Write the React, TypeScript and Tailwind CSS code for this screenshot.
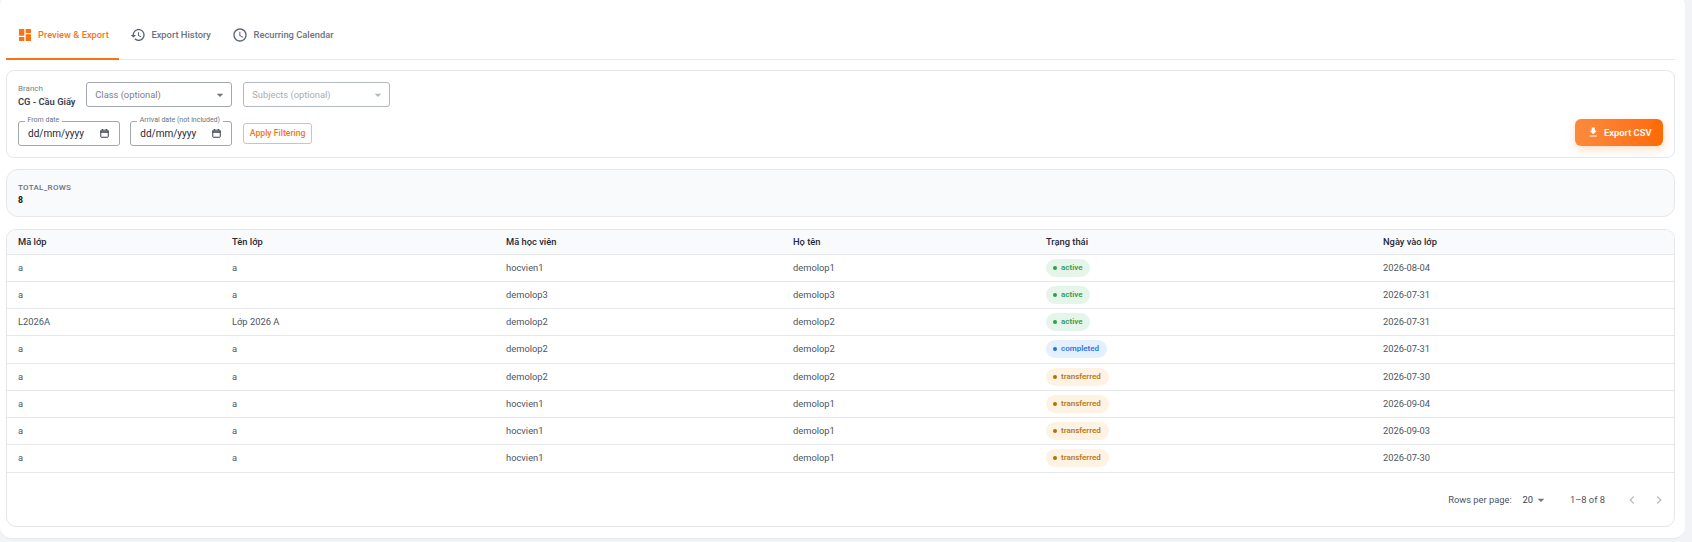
import type { ReactNode } from "react";

const rows = [
    ["a", "a", "hocvien1", "demolop1", "active", "2026-08-04"],
    ["a", "a", "demolop3", "demolop3", "active", "2026-07-31"],
    ["L2026A", "Lớp 2026 A", "demolop2", "demolop2", "active", "2026-07-31"],
    ["a", "a", "demolop2", "demolop2", "completed", "2026-07-31"],
    ["a", "a", "demolop2", "demolop2", "transferred", "2026-07-30"],
    ["a", "a", "hocvien1", "demolop1", "transferred", "2026-09-04"],
    ["a", "a", "hocvien1", "demolop1", "transferred", "2026-09-03"],
    ["a", "a", "hocvien1", "demolop1", "transferred", "2026-07-30"],
];

const headers = ["Mã lớp", "Tên lớp", "Mã học viên", "Họ tên", "Trạng thái", "Ngày vào lớp"];

// one row of the table, same grid for header and body
const gridCols = "grid grid-cols-[214px_274px_287px_253px_337px_1fr] items-center";

const Icon = ({ d, className }: { d: string; className: string }) => (
    <svg viewBox="0 0 24 24" fill="currentColor" className={className}>
        <path d={d} />
    </svg>
);

const ICONS = {
    dashboard: "M3 13h8V3H3zm0 8h8v-6H3zm10 0h8V11h-8zm0-18v6h8V3z",
    history:
        "M13 3c-4.97 0-9 4.03-9 9H1l3.89 3.89.07.14L9 12H6c0-3.87 3.13-7 7-7s7 3.13 7 7-3.13 7-7 7c-1.93 0-3.68-.79-4.94-2.06l-1.42 1.42C8.27 19.99 10.51 21 13 21c4.97 0 9-4.03 9-9s-4.03-9-9-9zm-1 5v5l4.28 2.54.72-1.21-3.5-2.08V8H12z",
    schedule:
        "M11.99 2C6.47 2 2 6.48 2 12s4.47 10 9.99 10C17.52 22 22 17.52 22 12S17.52 2 11.99 2zM12 20c-4.42 0-8-3.58-8-8s3.58-8 8-8 8 3.58 8 8-3.58 8-8 8zm.5-13H11v6l5.25 3.15.75-1.23-4.5-2.67z",
    download: "M19 9h-4V3H9v6H5l7 7 7-7zM5 18v2h14v-2H5z",
    caret: "M7 10l5 5 5-5z",
    left: "M15.41 7.41 14 6l-6 6 6 6 1.41-1.41L10.83 12z",
    right: "M10 6 8.59 7.41 13.17 12l-4.58 4.59L10 18l6-6z",
};

const Tab = ({ icon, label, active }: { icon: string; label: string; active?: boolean }) => (
    <div
        className={`-mb-px flex h-[60px] items-center gap-[5.33px] border-b-2 px-[10.67px] pt-[11px] text-[9.33px] font-medium ${
            active ? "border-[#f97316] text-[#f97316]" : "border-transparent text-[#6b7280]"
        }`}
    >
        <Icon d={icon} className={`size-[16px] ${active ? "text-[#f97316]" : "text-[#5b6472]"}`} />
        {label}
    </div>
);

const Select = ({ label, disabled, className }: { label: string; disabled?: boolean; className: string }) => (
    <div
        className={`flex h-[25px] items-center justify-between rounded-[3px] border pl-[8px] pr-[3px] text-[9.33px] ${className} ${
            disabled ? "border-[#b4b8bf] text-[#a8adb5]" : "border-[#a3a8b0] text-[#7a808a]"
        }`}
    >
        {label}
        <Icon d={ICONS.caret} className={`size-[16px] ${disabled ? "text-[#b5b9bf]" : "text-[#757575]"}`} />
    </div>
);

const DateField = ({ label }: { label: string }) => (
    <div className="relative flex h-[25px] w-[101.5px] items-center justify-between rounded-[3px] border border-[#a3a8b0] pl-[9px] pr-[10px] text-[10px] text-[#1f2937]">
        <span className="absolute left-[5.5px] top-[-6px] whitespace-nowrap bg-white px-[3px] text-[7px] leading-[9px] text-[#6b7280]">{label}</span>
        dd/mm/yyyy
        <svg viewBox="0 0 12 12" fill="none" stroke="#1f2937" className="size-[9px]">
            <rect x="1" y="1.5" width="10" height="9.5" rx="1" strokeWidth="1.2" />
            <path d="M1 4h10" strokeWidth="1.8" />
            <path d="M3.5 0v2M8.5 0v2" strokeWidth="1.2" />
        </svg>
    </div>
);

const statusStyles: Record<string, { pill: string; dot: string }> = {
    active: { pill: "w-[44px] bg-[#e6f5ea] text-[#2e9e5b]", dot: "bg-[#2e9e4f]" },
    completed: { pill: "w-[61px] bg-[#e5f0ff] text-[#2f74e8]", dot: "bg-[#1f6fe5]" },
    transferred: { pill: "w-[63px] bg-[#fef3e2] text-[#b7791f]", dot: "bg-[#b86e00]" },
};

const Status = ({ value }: { value: string }) => {
    const s = statusStyles[value];
    return (
        <span className={`flex h-[18px] items-center gap-[4px] rounded-full pl-[7px] text-[8px] font-semibold ${s.pill}`}>
            <span className={`size-[4px] rounded-full ${s.dot}`} />
            {value}
        </span>
    );
};

const Card = ({ className, children }: { className: string; children: ReactNode }) => (
    <div className={`border border-[#e5e7eb] ${className}`}>{children}</div>
);

export default function App() {
    return (
        <div className="h-[542px] w-full overflow-hidden bg-[#f2f3f6] pr-[7px] font-['Roboto',sans-serif]">
            <div className="-mt-[6px] h-[545px] rounded-[12px] border-b border-[#e5e7eb] bg-white pl-[6px] pr-[10px] pt-[6px]">
                <div className="flex h-[60px] border-b border-[#e5e7eb]">
                    <Tab icon={ICONS.dashboard} label="Preview & Export" active />
                    <Tab icon={ICONS.history} label="Export History" />
                    <Tab icon={ICONS.schedule} label="Recurring Calendar" />
                </div>

                <Card className="mt-[10px] flex h-[87.5px] items-end justify-between rounded-[8px] px-[11px] pb-[10.5px]">
                    <div className="flex flex-col gap-[14px]">
                        <div className="flex items-center">
                            <div className="h-[25px] w-[68.3px] whitespace-nowrap">
                                <div className="text-[8px] leading-[13px] text-[#7a808a]">Branch</div>
                                <div className="text-[9.33px] font-semibold leading-[13px] text-[#374151]">CG - Cầu Giấy</div>
                            </div>
                            <Select label="Class (optional)" className="w-[145.4px]" />
                            <Select label="Subjects (optional)" disabled className="ml-[11.6px] w-[146.4px]" />
                        </div>
                        <div className="flex items-center">
                            <DateField label="From date" />
                            <div className="ml-[10.8px]">
                                <DateField label="Arrival date (not included)" />
                            </div>
                            <button className="ml-[11.6px] flex h-[20.5px] w-[68.4px] items-center justify-center rounded-[3px] border border-[#f7b595] text-[8.67px] font-medium text-[#f97316]">
                                Apply Filtering
                            </button>
                        </div>
                    </div>
                    <button className="flex h-[26.7px] w-[88px] items-center justify-center gap-[5px] rounded-[6px] bg-gradient-to-r from-[#fb8a3c] to-[#ff6a00] text-[9.33px] font-semibold text-white shadow-[0_3px_8px_rgba(249,115,22,0.25)]">
                        <Icon d={ICONS.download} className="size-[12.5px]" />
                        Export CSV
                    </button>
                </Card>

                <Card className="mt-[11px] h-[48.5px] rounded-[12px] bg-[#f9fafb] pl-[11px] pt-[11px]">
                    <div className="text-[8px] font-medium leading-[13px] tracking-[0.3px] text-[#6b7280]">TOTAL_ROWS</div>
                    <div className="text-[8.67px] font-bold leading-[13px] text-[#111827]">8</div>
                </Card>

                <Card className="mt-[11.5px] h-[298.5px] overflow-hidden rounded-[10px]">
                    <div className={`${gridCols} h-[25px] border-b border-[#e5e7eb] bg-[#f9fafb] pl-[11px] text-[9.33px] font-medium text-[#1f2937]`}>
                        {headers.map((h) => (
                            <div key={h}>{h}</div>
                        ))}
                    </div>
                    {rows.map((row, i) => (
                        <div key={i} className={`${gridCols} h-[27.25px] border-b border-[#e5e7eb] pl-[11px] text-[9.33px] text-[#4b5563]`}>
                            {row.map((cell, j) =>
                                j === 4 ? (
                                    <div key={j} className="flex">
                                        <Status value={cell} />
                                    </div>
                                ) : (
                                    <div key={j}>{cell}</div>
                                ),
                            )}
                        </div>
                    ))}
                    <div className="flex h-[54px] items-center justify-end pr-[7px] text-[9.33px] text-[#4b5563]">
                        <span>Rows per page:</span>
                        <span className="ml-[10.7px] text-[#374151]">20</span>
                        <Icon d={ICONS.caret} className="size-[16px] text-[#757575]" />
                        <span className="ml-[21px]">1–8 of 8</span>
                        <Icon d={ICONS.left} className="ml-[19px] size-[16px] text-[#bdbdbd]" />
                        <Icon d={ICONS.right} className="ml-[11px] size-[16px] text-[#bdbdbd]" />
                    </div>
                </Card>
            </div>
        </div>
    );
}
